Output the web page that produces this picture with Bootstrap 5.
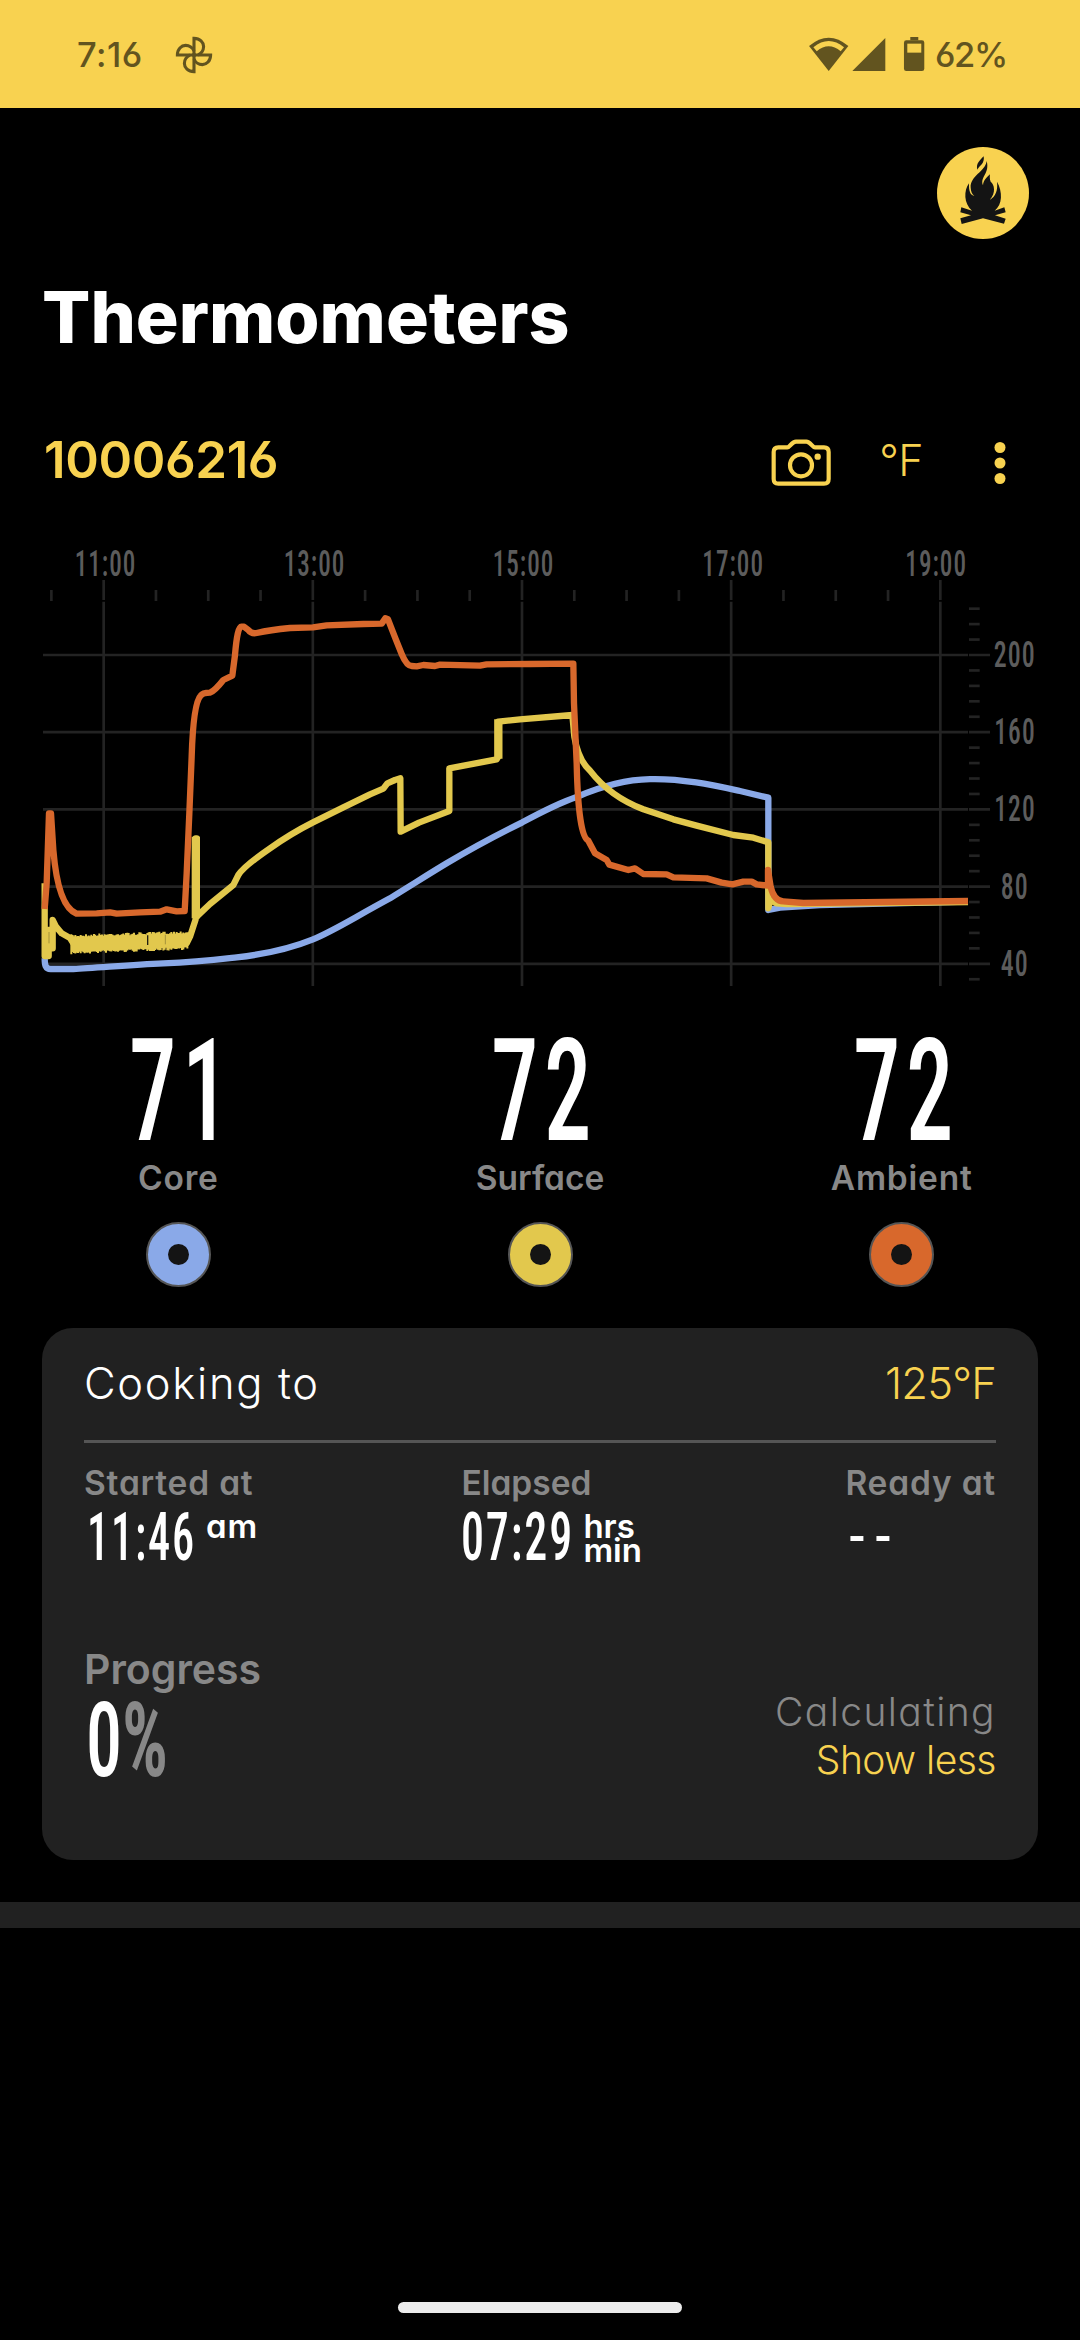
<!DOCTYPE html>
<html lang="en">
<head>
<meta charset="utf-8">
<meta name="viewport" content="width=device-width, initial-scale=1">
<title>Thermometers</title>
<link href="https://cdn.jsdelivr.net/npm/bootstrap@5.3.0/dist/css/bootstrap.min.css" rel="stylesheet">
<style>
:root{--sun:#f8d250;--panel:#212121;--dim:#888}
body{width:1080px;height:2340px;background:#000;color:#fff;overflow:hidden;font-family:Inter,"Liberation Sans",sans-serif;font-feature-settings:"cv11","cv03","cv04"}
svg{display:block;flex:none;overflow:visible}
svg text{font-family:Roboto,"Liberation Sans",sans-serif;font-stretch:75%;font-weight:500;letter-spacing:.04em}
.statusbar{height:108px;background:var(--sun);color:#62541f;font-size:34.5px;line-height:36px;font-weight:500;padding:1px 73px 0 77px}
.page-x{padding-left:42px;padding-right:42px}
.sun{color:var(--sun)}
.dim{color:var(--dim)}
.avatar-row{padding:39px 51px 0 0}
.title{font-size:71.5px;line-height:72px;font-weight:800;margin:42px 0 0}
.device{height:60px;margin-top:77px}
.serial{font-size:51px;line-height:60px;font-weight:600;letter-spacing:-.4px;padding-left:2px}
.unit{font-size:43px;line-height:60px;font-weight:300;letter-spacing:-.5px}
.readings{margin:30px -2.5px 0}
.reading-value{font-size:143px;letter-spacing:.06em}
.label-sm{font-size:33.5px;line-height:40px;font-weight:600}
.track-1{letter-spacing:.8px}
.track-2{letter-spacing:1.2px}
.probe{width:65px;height:65px;margin-top:24px;border:2.5px solid #555}
.probe::after{content:"";width:21px;height:21px;border-radius:50%;background:#141414}
.bg-core{background:#8aa9e8}
.bg-surface{background:#e2c84d}
.bg-ambient{background:#d8682c}
.cook{margin:41px 42px 0;height:532px;border-radius:31px;background:var(--panel);padding:0 42px}
.cook-head{height:112px;font-size:43.5px;line-height:110px;font-weight:300;border-bottom:3px solid #555;box-sizing:content-box}
.cook-times{padding-top:20px}
.time-row{margin-top:6px}
.suffix{font-size:33px;line-height:24px;font-weight:600;padding:5px 0 0 4px}
.progress-row{margin-top:82px}
.progress-label{font-size:41px;line-height:50px;font-weight:600}
.progress-value text{font-size:103px;letter-spacing:0}
.light-lg{font-size:39px;line-height:48px;font-weight:300}
.divider-bar{margin-top:42px;height:26px;background:var(--panel)}
.pill{width:284px;height:11px;margin:374px auto 0;background:#ececec}
</style>
</head>
<body>
<header class="statusbar d-flex align-items-center">
  <span style="letter-spacing:.5px">7:16</span>
  <svg style="margin-left:32px" width="38" height="38" viewBox="-19 -19 38 38" fill="none" stroke="#62541f" stroke-width="3.1">
    <g id="blade"><path d="M0 1.5V-16.6C6 -16.6 9.6 -12.6 9.6 -8.4C9.6 -4.6 7 -1.2 4 0"/></g>
    <use href="#blade" transform="rotate(90)"/><use href="#blade" transform="rotate(180)"/><use href="#blade" transform="rotate(270)"/>
  </svg>
  <svg class="ms-auto" width="120" height="38.3" viewBox="200 105 360 115" fill="#62541f">
    <path d="M206 138Q265 88 324 138L265 213Z"/>
    <path d="M219 142Q265 104 311 142L301 154Q265 124 229 154Z" fill="#f8d250"/>
    <path d="M336 213H435V114Z"/>
    <path d="M510 111h24v10h-24z"/><rect x="491" y="121" width="61" height="92" rx="7"/><path d="M501 131h42v27h-42z" fill="#f8d250"/>
  </svg>
  <span style="margin-left:8px;letter-spacing:-1.3px">62%</span>
</header>

<div class="avatar-row d-flex justify-content-end">
  <svg width="92" height="92" viewBox="22 20 276 276">
    <circle cx="160" cy="158" r="138" fill="#f8d250"/>
    <g fill="#141414">
      <path d="M162 48C152 59 138 69 143 88C149 76 166 70 162 48Z"/>
      <path d="M171 62C167 94 121 106 123 142C124 154 127 162 134 166C123 166 117 154 118 129C102 150 102 190 127 211L95 201L92 216L124 225L92 234L96 251L160 234L223 250L228 235L196 225L228 216L224 201L195 211C219 192 219 154 202 124C205 150 198 168 180 179C200 156 194 133 183 124C180 116 180 109 181 102C170 112 161 121 160 135C150 110 181 100 171 62Z"/>
    </g>
  </svg>
</div>

<main>
  <div class="page-x">
    <h1 class="title">Thermometers</h1>
    <div class="device d-flex align-items-center">
      <span class="serial sun me-auto">10006216</span>
      <svg width="60" height="48" viewBox="91 1320 180 144" fill="none" stroke="#f8d250" stroke-width="12.5" style="margin:6px 48px 0 0" stroke-linejoin="round">
        <path d="M113 1345H140C148 1345 153 1328 166 1328H197C210 1328 214 1345 223 1345H250Q264 1345 264 1359V1440Q264 1454 250 1454H113Q99 1454 99 1440V1359Q99 1345 113 1345Z"/>
        <circle cx="181" cy="1399" r="33"/><circle cx="231" cy="1373" r="9.500" fill="#f8d250" stroke="none"/>
      </svg>
      <span class="unit sun">°F</span>
      <svg width="12" height="44" viewBox="0 0 12 44" fill="#f8d250" style="margin:5px 32px 0 71px"><circle cx="6" cy="6.500" r="5.500"/><circle cx="6" cy="22" r="5.500"/><circle cx="6" cy="37.500" r="5.500"/></svg>
    </div>
  </div>

  <svg style="margin-top:40px" width="1080" height="470" viewBox="-90 0 3240 1410">
    <g id="grid" stroke="#232323" stroke-width="8" fill="none"></g>
    <g fill="none" stroke-width="19" stroke-linejoin="round">
      <path stroke="#8aa9e8" d="M44 1285C44 1305 46 1317 62 1317H130C200 1314 300 1304 400 1300S540 1291 620 1282S790 1252 849 1228S960 1170 1080 1105C1150 1062 1200 1030 1250 1000C1320 958 1400 915 1477 877C1540 843 1590 818 1640 801C1700 775 1780 749 1860 747.500C1960 745 2060 768 2130 783L2215 803V1140L2250 1133L2370 1125L2814 1115"/>
      <path stroke="#e2c84d" d="M44 1060V1278H56V1200H60V1255H68V1170L78 1190L95 1210L120 1224L130 1240H470L480 1220L497 1168V925H500V1160L540 1122L610 1065L625 1035Q640 1010 720 955Q780 912 849 877L940 832L1020 793L1060 776L1072 760L1095 750L1111 745L1112 905L1167 878L1258 843V715L1400 688L1405 680V575L1470 568L1627 555L1633 620Q1645 690 1680 722Q1740 800 1840 838L1930 868L2000 887L2110 915L2170 923L2215 937V1135L2221 1110L2240 1120L2270 1122L2814 1116"/>
      <path stroke="#e2c84d" stroke-width="25" d="M497.500 920V1165M1405 568V686"/>
      <path id="ripple" stroke="#e2c84d" stroke-width="6"/>
      <path stroke="#221f10" stroke-width="4" d="M353 1216V1245"/><path stroke="#a5933a" stroke-width="3" d="M57 1206V1240M406 1214V1243"/>
      <path stroke="#d8682c" d="M44 1137L50 1060L57 850H63L70 960Q84 1130 140 1151L200 1150L240 1147L260 1151L330 1147L390 1145L410 1138L440 1144L464 1143L470 1030L478 850L485 680Q490 520 512 497Q518 488 540 488Q555 482 580 450L607 437L615 375Q622 290 634 290L642 290L655 300Q664 312 680 309Q720 300 780 294L849 292L890 286L1000 282L1055 281L1066 265L1074 268L1095 322L1115 372Q1130 408 1145 408L1160 409L1180 405L1215 408L1230 404L1350 407L1370 403L1500 402L1630 401L1632 520L1640 700Q1645 920 1675 932L1695 970L1730 990L1738 1004L1795 1020L1815 1015L1840 1032L1910 1033L1930 1042L2030 1045L2075 1058L2107 1063L2140 1055L2165 1055L2180 1063L2214 1067V1020L2222 1070Q2232 1113 2260 1114L2320 1119L2814 1113"/>
    </g>
    <g id="axis" fill="#5c5c5c" font-size="108"></g>
  </svg>

  <section class="readings d-flex text-center">
    <div class="w-100 d-flex flex-column align-items-center">
      <svg width="106" height="120"><text class="reading-value" x="4" y="110" textLength="106" lengthAdjust="spacingAndGlyphs" fill="#fff">71</text></svg>
      <div class="label-sm dim mt-2 track-1">Core</div>
      <div class="probe bg-core rounded-circle d-flex align-items-center justify-content-center"></div>
    </div>
    <div class="w-100 d-flex flex-column align-items-center">
      <svg width="106" height="120"><text class="reading-value" x="4" y="110" textLength="106" lengthAdjust="spacingAndGlyphs" fill="#fff">72</text></svg>
      <div class="label-sm dim mt-2">Surface</div>
      <div class="probe bg-surface rounded-circle d-flex align-items-center justify-content-center"></div>
    </div>
    <div class="w-100 d-flex flex-column align-items-center">
      <svg width="106" height="120"><text class="reading-value" x="4" y="110" textLength="106" lengthAdjust="spacingAndGlyphs" fill="#fff">72</text></svg>
      <div class="label-sm dim mt-2 track-1">Ambient</div>
      <div class="probe bg-ambient rounded-circle d-flex align-items-center justify-content-center"></div>
    </div>
  </section>

  <section class="cook">
    <div class="cook-head d-flex justify-content-between">
      <span style="letter-spacing:1.7px">Cooking to</span><span class="sun" style="letter-spacing:-.8px">125°F</span>
    </div>
    <div class="cook-times d-flex justify-content-between">
      <div>
        <div class="label-sm dim track-1">Started at</div>
        <div class="time-row d-flex">
          <svg width="118" height="52"><text x="3" y="51" font-size="66" textLength="109" lengthAdjust="spacingAndGlyphs" fill="#fff">11:46</text></svg>
          <div class="suffix track-1">am</div>
        </div>
      </div>
      <div>
        <div class="label-sm dim">Elapsed</div>
        <div class="time-row d-flex">
          <svg width="118" height="52"><text x="0" y="51" font-size="66" textLength="113" lengthAdjust="spacingAndGlyphs" fill="#fff">07:29</text></svg>
          <div class="suffix">hrs<br>min</div>
        </div>
      </div>
      <div>
        <div class="label-sm dim track-1">Ready at</div>
        <svg class="time-row" width="118" height="52"><text x="4" y="50" font-size="66" style="letter-spacing:.16em;font-weight:400" textLength="52" lengthAdjust="spacingAndGlyphs" fill="#fff">--</text></svg>
      </div>
    </div>
    <div class="progress-row d-flex justify-content-between align-items-end">
      <div>
        <div class="progress-label dim">Progress</div>
        <svg class="progress-value" width="100" height="88.5" style="margin-top:1px"><text x="2" y="81" textLength="36" lengthAdjust="spacingAndGlyphs" fill="#fff">0</text><text x="38" y="81" style="font-weight:700" textLength="46" lengthAdjust="spacingAndGlyphs" fill="#888">%</text></svg>
      </div>
      <div class="text-end light-lg">
        <span class="dim" style="letter-spacing:1.4px">Calculating</span><br><span class="sun" style="letter-spacing:-.5px">Show less</span>
      </div>
    </div>
  </section>
  <div class="divider-bar"></div>
</main>
<div class="pill rounded-pill"></div>
<script>
// Axis geometry: chart units are thirds of a pixel.
const x0 = 221, dx = 627.5 / 4, y0 = 375, dy = 231.6;
let grid = '', axis = '';
for (let i = -1; i <= 16; i++) {
  const x = x0 + i * dx;
  grid += i % 4 === 0 ? `<path d="M${x} 150V210M${x} 215V1368"/>` : `<path d="M${x} 180V213"/>`;
}
for (let i = 0; i < 5; i++) grid += `<path d="M39 ${y0 + i * dy}H2814M2817 ${y0 + i * dy}H2880"/>`;
for (let i = -3; i <= 21; i++) if (i % 5) grid += `<path d="M2817 ${y0 + i * dy / 5}H2849"/>`;
[['11:00', 134], ['13:00', 761], ['15:00', 1388], ['17:00', 2017], ['19:00', 2626]].forEach(([t, x]) =>
  axis += `<text x="${x}" y="138" textLength="185" lengthAdjust="spacingAndGlyphs">${t}</text>`);
[['200', 2891, 126], ['160', 2893, 124], ['120', 2893, 124], ['80', 2912, 84], ['40', 2912, 84]].forEach(([t, x, w], i) =>
  axis += `<text x="${x}" y="${y0 + i * dy + 36}" textLength="${w}" lengthAdjust="spacingAndGlyphs">${t}</text>`);
document.getElementById('grid').innerHTML = grid;
document.getElementById('axis').innerHTML = axis;
// Rapid sensor flicker drawn as a dense band of strokes.
let d = '', seed = 7;
const rnd = () => (seed = seed * 16807 % 2147483647) / 2147483647 - .5;
for (let x = 124; x < 473; x += 4) d += `M${x} ${1217 - (x - 120) * .03 + rnd() * 8}V${1269 - (x - 120) * .04 + rnd() * 9}`;
document.getElementById('ripple').setAttribute('d', d);
</script>
<script src="https://cdn.jsdelivr.net/npm/bootstrap@5.3.0/dist/js/bootstrap.bundle.min.js"></script>
</body>
</html>
